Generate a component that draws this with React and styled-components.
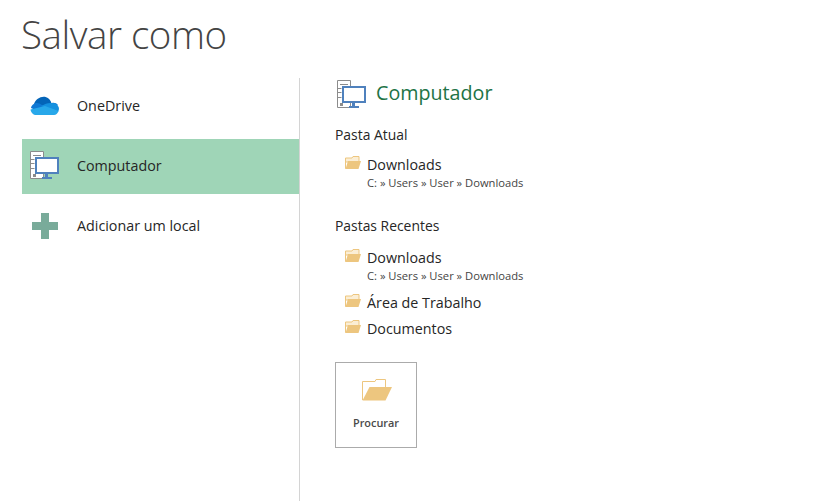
import React from "react";
import styled, { createGlobalStyle } from "styled-components";

const Global = createGlobalStyle`
  html, body { margin: 0; padding: 0; background: #fff; }
  body { font-family: "Open Sans", "Noto Sans", sans-serif; color: #262626; overflow: hidden; }
`;
const Page = styled.div`
  width: 816px; height: 501px; display: flex; flex-direction: column; background: #fff; overflow: hidden;
`;
const Title = styled.h1`
  margin: 0; height: 78px; box-sizing: border-box; padding: 9px 0 0 21px;
  font-size: 38.5px; line-height: 50px; font-weight: 300; color: #444; letter-spacing: -0.45px;
`;
const Body = styled.div`display: flex; flex: 1; min-height: 0;`;
const Side = styled.nav`
  width: 300px; box-sizing: border-box; border-right: 1px solid #d4d4d4; padding: 1px 0 0 22px;
  display: flex; flex-direction: column; gap: 5px;
`;
const Place = styled.div`
  height: 55px; box-sizing: border-box; padding: 0 0 2px 8px; display: flex; align-items: center;
  font-size: 14.3px; color: #262626;
  background: ${p => (p.$active ? "#9fd5b7" : "transparent")};
`;
const PlaceIcon = styled.span`
  width: 29px; margin-right: 18px; display: flex; justify-content: center; flex: none; align-items: center;
`;
const Main = styled.main`
  flex: 1; padding: 1px 0 0 35px; display: flex; flex-direction: column; align-items: flex-start;
`;
const Heading = styled.div`
  display: flex; align-items: center; height: 30px; padding-left: 2px; gap: 10px;
  font-size: 19.7px; color: #217346; margin-bottom: 16px;
`;
const HeadingLabel = styled.span`padding-bottom: 4px;`;
const Section = styled.div`font-size: 13.9px; line-height: 20px; color: #262626; margin-bottom: ${p => p.$gap}px;`;
const Folder = styled.div`
  display: flex; align-items: flex-start; padding-left: 10px; gap: 6px; margin-bottom: ${p => p.$gap || 0}px;
`;
const FolderText = styled.div`display: flex; flex-direction: column;`;
const FolderName = styled.span`font-size: 14.3px; line-height: 20px; color: #262626;`;
const FolderPath = styled.span`font-size: 11.2px; line-height: 15px; margin-bottom: 2px; color: #444;`;
const Browse = styled.button`
  width: 82px; height: 86px; box-sizing: border-box; margin-top: 23px; padding: 16px 0 0;
  border: 1px solid #ababab; background: #fff; display: flex; flex-direction: column; align-items: center;
  font-family: inherit; font-size: 10.9px; font-weight: 600; color: #4a4a4a;
`;
const BrowseLabel = styled.span`margin-top: 14px; line-height: 16px;`;
const FolderSvg = styled.svg`flex: none; margin-top: 1px;`;
const BigFolderSvg = styled.svg`display: block; margin-left: 1px;`;
const ComputerSvg = styled.svg`display: block; flex: none;`;

const Cloud = () => (
  <svg width="29" height="20" viewBox="0 0 29 20">
    <path d="M4 8C6 1.500 14 -1.500 18.500 2.500c1.500 1 2.500 3 3 5L12 13z" fill="#0364b8" />
    <path d="M3 8.500C4.500 7 7 6.500 9.500 7.500L15 11l7-4c2-.5 4.500 0 6 2L12 17 1 12c.2-1.500 1-2.700 2-3.500z" fill="#0f78d4" />
    <path d="M21.500 7c3.500-.5 6.500 1.500 7.300 4.500.4 1.500-.1 3.500-1 4.500L17 13l-6-3 5-2.200c1.500-.6 3.500-1 5.500-.8z" fill="#1490df" />
    <path d="M6 19h18c2 0 3.500-1.500 4.500-4L15 10 .5 13.500C1 17 3.500 19 6 19z" fill="#28a8ea" />
  </svg>
);
const Computer = () => (
  <ComputerSvg width="29" height="29" viewBox="0 0 29 29" fill="none">
    <path d="M.5 27.500V.5h13v6.500h-8v15h8v5.500z" stroke="#8c8c8c" fill="#fff" />
    <path d="M3 4.500h8M.5 8.500h4M.5 12.500h4M.5 17.500h4" stroke="#8c8c8c" />
    <rect x="3" y="23" width="3" height="3" fill="#8c8c8c" />
    <rect x="6" y="7" width="22" height="15" fill="#fff" stroke="#4f81bd" strokeWidth="2" />
    <rect x="15" y="23" width="3" height="3" fill="#4f81bd" />
    <rect x="12" y="26" width="10" height="2" fill="#4f81bd" />
  </ComputerSvg>
);
const Plus = () => (
  <svg width="26" height="26" viewBox="0 0 26 26"><path d="M9 0h8v9h9v8h-9v9H9v-9H0V9h9z" fill="#79ab9a" /></svg>
);
const Fold = () => (
  <FolderSvg width="16" height="13" viewBox="0 0 16 13">
    <path d="M.5 12.500V2h6.500l1-1.500h6V6H.5z" fill="#fbeed5" stroke="#edc67f" />
    <path d="M.5 13 3 5h13l-2.500 8z" fill="#edc67f" />
  </FolderSvg>
);
const BigFold = () => (
  <BigFolderSvg width="30" height="22" viewBox="0 0 30 22">
    <path d="M.5 21V2.500H13l1-2h9.500V8" fill="none" stroke="#edc67f" />
    <path d="M.5 21.500 7.500 8H30l-6.500 13.500z" fill="#edc67f" />
  </BigFolderSvg>
);
const Path = () => <FolderPath>C: » Users » User » Downloads</FolderPath>;

export default function App() {
  return (
    <Page>
      <Global />
      <Title>Salvar como</Title>
      <Body>
        <Side>
          <Place><PlaceIcon><Cloud /></PlaceIcon>OneDrive</Place>
          <Place $active><PlaceIcon><Computer /></PlaceIcon>Computador</Place>
          <Place><PlaceIcon><Plus /></PlaceIcon>Adicionar um local</Place>
        </Side>
        <Main>
          <Heading><Computer /><HeadingLabel>Computador</HeadingLabel></Heading>
          <Section $gap={10}>Pasta Atual</Section>
          <Folder $gap={24}><Fold /><FolderText><FolderName>Downloads</FolderName><Path /></FolderText></Folder>
          <Section $gap={12}>Pastas Recentes</Section>
          <Folder $gap={8}><Fold /><FolderText><FolderName>Downloads</FolderName><Path /></FolderText></Folder>
          <Folder $gap={6}><Fold /><FolderName>Área de Trabalho</FolderName></Folder>
          <Folder><Fold /><FolderName>Documentos</FolderName></Folder>
          <Browse><BigFold /><BrowseLabel>Procurar</BrowseLabel></Browse>
        </Main>
      </Body>
    </Page>
  );
}
